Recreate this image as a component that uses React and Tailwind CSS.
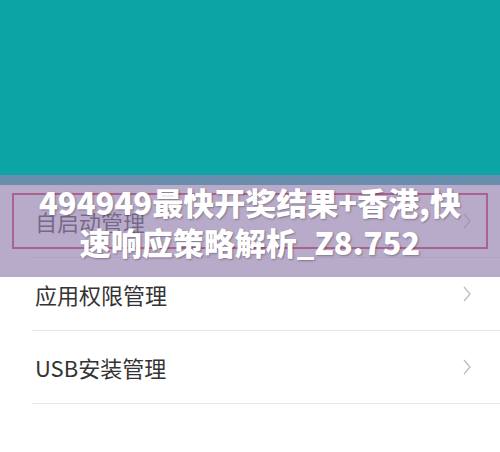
import React from 'react';

const items = ['自启动管理', '应用权限管理', 'USB安装管理'];

const Chevron = () => (
  <svg width="10" height="16" viewBox="0 0 10 16" fill="none">
    <polyline points="2,1 8,8 2,15" stroke="#bdbdbd" strokeWidth="1.3" />
  </svg>
);

const App = () => {
  return (
    <div className="relative w-[500px] h-[452px] bg-white overflow-hidden" style={{ fontFamily: '"Noto Sans CJK SC", "Noto Sans", sans-serif' }}>
      <div className="h-[185px] bg-[#0ca4a4]" />

      <div>
        {items.map((label, i) => (
          <div key={label}>
            <div className="px-[12px] pt-[8px] pb-[8px]">
              <div className={`h-[56px] flex items-center justify-between pl-[21px] pr-[14px] border-2 ${i === 0 ? 'border-[#d3234a]' : 'border-transparent'}`}>
                <span className="text-[22px] text-[#333333] leading-none">{label}</span>
                <Chevron />
              </div>
            </div>
            <div className="ml-[32px] h-px bg-[#e6e6e6]" />
          </div>
        ))}
      </div>

      {/* 标题遮罩 */}
      <div className="absolute left-0 right-0 top-[175px] h-[102px] bg-[rgba(150,129,176,0.68)] flex items-center justify-center">
        <h1
          className="text-white font-extrabold text-[31px] leading-[40px] text-center -mt-[8px]"
          style={{ textShadow: '1px 1px 2px rgba(0,0,0,0.3)' }}
        >
          494949最快开奖结果+香港,快<br />速响应策略解析_Z8.752
        </h1>
      </div>
    </div>
  );
};

export default App;
